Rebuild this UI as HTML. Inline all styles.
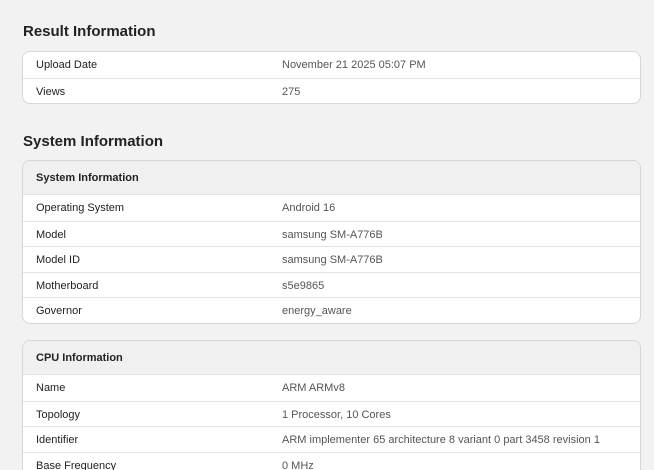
<!DOCTYPE html><html><head><style>
html,body{margin:0;width:654px;height:470px;overflow:hidden}
body{background:#f2f2f2;font-family:"Liberation Sans",Arial,sans-serif;position:relative}
h2{position:absolute;left:23px;margin:0;font-size:15px;font-weight:bold;color:#222}
.card{position:absolute;left:22px;width:617px;background:#fff;border:1px solid #d6d6d6;border-radius:8px;overflow:hidden}
.hd{height:33px;line-height:34px;background:#f0f0f0;padding-left:13px;font-size:11px;font-weight:bold;color:#222;border-bottom:1px solid #e2e2e2}
.r{height:25.5px;line-height:26px;font-size:11px;border-top:1px solid #e4e4e4;position:relative;box-sizing:border-box}
.r:first-child,.hd+.r{border-top:none}
.r span{position:absolute;left:13px;color:#222}
.r b{position:absolute;left:259px;font-weight:normal;color:#555}
</style></head><body>
<h2 style="top:23px">Result Information</h2>
<div class="card" style="top:51px">
<div class="r"><span>Upload Date</span><b>November 21 2025 05:07 PM</b></div>
<div class="r"><span>Views</span><b>275</b></div>
</div>
<h2 style="top:133px">System Information</h2>
<div class="card" style="top:160px">
<div class="hd">System Information</div>
<div class="r"><span>Operating System</span><b>Android 16</b></div>
<div class="r"><span>Model</span><b>samsung SM-A776B</b></div>
<div class="r"><span>Model ID</span><b>samsung SM-A776B</b></div>
<div class="r"><span>Motherboard</span><b>s5e9865</b></div>
<div class="r"><span>Governor</span><b>energy_aware</b></div>
</div>
<div class="card" style="top:340px;height:140px">
<div class="hd">CPU Information</div>
<div class="r"><span>Name</span><b>ARM ARMv8</b></div>
<div class="r"><span>Topology</span><b>1 Processor, 10 Cores</b></div>
<div class="r"><span>Identifier</span><b>ARM implementer 65 architecture 8 variant 0 part 3458 revision 1</b></div>
<div class="r"><span>Base Frequency</span><b>0 MHz</b></div>
</div>
</body></html>
